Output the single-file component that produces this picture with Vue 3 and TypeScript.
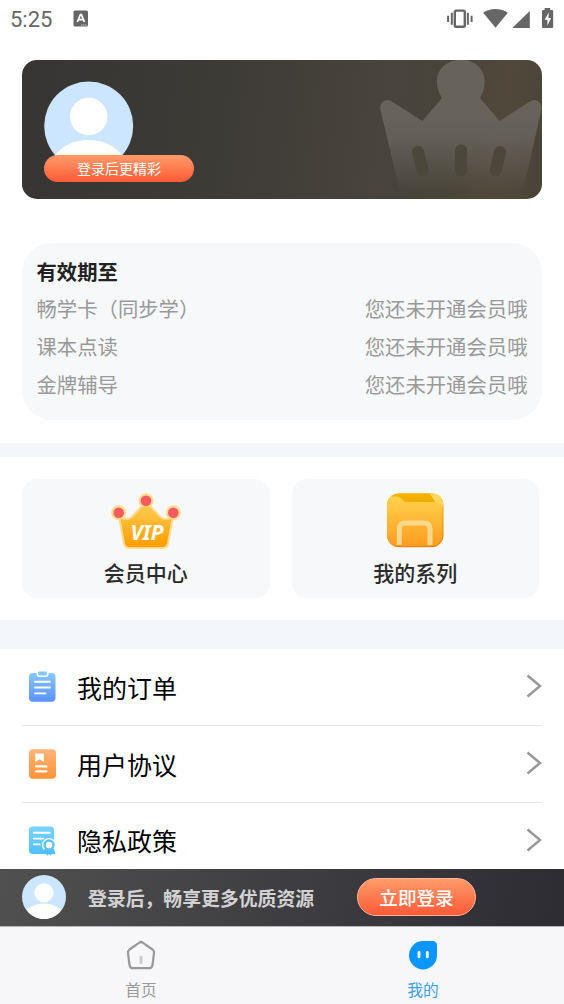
<script setup lang="ts">
interface MenuItem {
  icon: 'order' | 'agreement' | 'privacy'
  label: string
}

const memberships: string[] = ['畅学卡（同步学）', '课本点读', '金牌辅导']

const menu: MenuItem[] = [
  { icon: 'order', label: '我的订单' },
  { icon: 'agreement', label: '用户协议' },
  { icon: 'privacy', label: '隐私政策' },
]
</script>

<template>
  <div class="screen">
    <header class="status">
      <span class="time">5:25</span>
      <svg class="kbd" width="16" height="18" viewBox="0 0 16 18">
        <rect x="0.5" y="0.5" width="14.5" height="16" rx="1.5" fill="#666" />
        <path d="M4.3 12 7.4 4.7h1L11.5 12M5.5 9.6h4.8" fill="none" stroke="#fff" stroke-width="1.7" />
        <path d="M8 15h5.5" stroke="#ccc" stroke-width="1" stroke-dasharray="1.4 .7" />
      </svg>
      <svg class="signals" width="108" height="22" viewBox="446 8 108 22">
        <rect x="454.8" y="10.6" width="10" height="16.2" rx="1.3" fill="none" stroke="#666" stroke-width="2.4" />
        <path d="M451.8 12.7v12M467.9 12.7v12M448.1 15.7v6.3M471.6 15.7v6.3" stroke="#666" stroke-width="2" />
        <path d="M483.2 12.7C490 7.7 501 7.7 507.8 12.7L495.5 27.8Z" fill="#666" />
        <path d="M529.8 11v17h-17.5Z" fill="#666" />
        <path d="M544.6 8h5.6v2h1.8q1.2 0 1.2 1.2v15.6q0 1.2-1.2 1.2h-8.8q-1.2 0-1.2-1.2V11.2q0-1.2 1.2-1.2h1.4z" fill="#666" />
        <path d="M548.7 12.5l-4 7.3h2.7v5.7l3.7-7.4h-2.7z" fill="#fff" />
      </svg>
    </header>

    <section class="hero">
      <svg class="crown" width="164" height="140" viewBox="378 59 164 140">
        <defs>
          <linearGradient id="crownFade" gradientUnits="userSpaceOnUse" x1="0" y1="115" x2="0" y2="192">
            <stop offset="0" stop-color="#67635b" />
            <stop offset=".3" stop-color="#67635b" stop-opacity=".86" />
            <stop offset="1" stop-color="#67635b" stop-opacity="0" />
          </linearGradient>
        </defs>
        <path
          d="M442 98C433 84 436 68 449 62.5C457 58.5 467 59 474 63C487 71 487 86 480 98L499.500 121L530 101.500C536 98 542 102 541.500 109L523 192H400L380.500 110C379 103 385 98 391 101L422.500 121Z"
          fill="url(#crownFade)"
        />
        <g stroke="#4c473b" stroke-width="12" stroke-linecap="round">
          <path d="M418 152l4.800 18.500M461 150.500v20M500 152l-4.400 18.500" />
        </g>
      </svg>
      <div class="hero-user">
        <svg class="avatar" width="90" height="90" viewBox="0 0 90 90">
          <circle cx="44.7" cy="45" r="44.5" fill="#cce6ff" />
          <circle cx="44.7" cy="35.5" r="18.7" fill="#fff" />
          <path d="M10 76C18 64 31 59 44.7 59S71 64 79 76C62 94 28 94 10 76Z" fill="#fff" />
        </svg>
        <button class="hero-login">登录后更精彩</button>
      </div>
    </section>

    <section class="validity">
      <div class="line title">有效期至</div>
      <div v-for="name in memberships" :key="name" class="line">
        <span>{{ name }}</span>
        <span>您还未开通会员哦</span>
      </div>
    </section>

    <div class="band thin"></div>

    <section class="tiles">
      <div class="tile">
        <svg width="72" height="60" viewBox="110 491 72 60">
          <defs>
            <linearGradient id="vipFill" gradientUnits="userSpaceOnUse" x1="0" y1="503" x2="0" y2="547">
              <stop offset="0" stop-color="#ffce59" />
              <stop offset="1" stop-color="#ff9d00" />
            </linearGradient>
          </defs>
          <g fill="#ffdc91">
            <circle cx="118.7" cy="512.7" r="7.500" />
            <circle cx="146" cy="500.8" r="7.500" />
            <circle cx="173.300" cy="512.7" r="7.500" />
          </g>
          <path d="M119 517Q126 520.500 131 517.500L142.500 505.500Q146 502.500 149.500 505.500L161 517.500Q166 520.500 173 517L168 543.500Q167 548 162.500 548H129.500Q125 548 124 543.500Z" fill="url(#vipFill)" stroke="#ffdc91" stroke-width="2" stroke-linejoin="round" />
          <g fill="#f75a5f">
            <circle cx="118.700" cy="512.700" r="5.300" />
            <circle cx="146" cy="500.800" r="5.300" />
            <circle cx="173.300" cy="512.700" r="5.300" />
          </g>
          <text x="147" y="539.600" class="vip" text-anchor="middle" textLength="33" lengthAdjust="spacingAndGlyphs">VIP</text>
        </svg>
        <span>会员中心</span>
      </div>
      <div class="tile">
        <svg width="72" height="60" viewBox="379.5 491 72 60">
          <defs>
            <linearGradient id="folderFill" x1="0" y1="0" x2="0" y2="1">
              <stop offset="0" stop-color="#ffd24d" />
              <stop offset="1" stop-color="#ff9c20" />
            </linearGradient>
            <linearGradient id="folderBack" x1="0" y1="0" x2="0" y2="1">
              <stop offset="0" stop-color="#f3b300" />
              <stop offset="1" stop-color="#ee8200" />
            </linearGradient>
          </defs>
          <rect x="387.500" y="493.300" width="56.500" height="54" rx="12" fill="url(#folderBack)" />
          <path d="M430 493.300Q443.500 493.300 444 506V508L436 502Z" fill="#ffd75c" />
          <path d="M387.500 506Q387.500 499.500 391.500 496.500H398Q400 496.500 401.500 498.300L404 500.700Q405.300 502 407.500 502H436Q443 502.500 443 509V533Q443 546 430.500 546H399Q387.500 545.500 387.500 533Z" fill="url(#folderFill)" />
          <path d="M399.800 545V529Q399.800 523 405.800 523H424.500Q430.500 523 430.500 529V545" fill="none" stroke="#f9d88c" stroke-width="5" />
        </svg>
        <span>我的系列</span>
      </div>
    </section>

    <div class="band thick"></div>

    <section class="menu">
      <div v-for="item in menu" :key="item.label" class="menu-row">
        <svg v-if="item.icon === 'order'" class="menu-icon" width="28" height="30" viewBox="0 0 28 30">
          <defs>
            <linearGradient id="orderFill" x1="0" y1="0" x2="0" y2="1">
              <stop offset="0" stop-color="#87c7ff" />
              <stop offset="1" stop-color="#5b91ff" />
            </linearGradient>
          </defs>
          <rect x="1" y="1" width="26.500" height="28.700" rx="4" fill="url(#orderFill)" />
          <rect x="9.300" y="-1.300" width="10.500" height="5.500" rx="2.200" fill="#87c7ff" stroke="#fff" stroke-width="1.500" />
          <path d="M7 9.700h15M7 15.500h15M7 21.400h10.500" stroke="#fff" stroke-width="1.900" stroke-linecap="round" />
        </svg>
        <svg v-else-if="item.icon === 'agreement'" class="menu-icon" width="28" height="30" viewBox="0 0 28 30">
          <defs>
            <linearGradient id="agreementFill" x1="0" y1="0" x2="0" y2="1">
              <stop offset="0" stop-color="#ffb47b" />
              <stop offset="1" stop-color="#ff9335" />
            </linearGradient>
          </defs>
          <rect x="1" y="0.300" width="27" height="29.400" rx="4" fill="url(#agreementFill)" />
          <path d="M7.300 4.500h8.500v8.500l-4.200-2.800-4.300 2.800z" fill="#fff" />
          <path d="M8 17.400h10.500M8 22.300h10.500" stroke="#fff" stroke-width="2.200" stroke-linecap="round" />
        </svg>
        <svg v-else class="menu-icon" width="28" height="30" viewBox="0 0 28 30">
          <defs>
            <linearGradient id="privacyFill" x1="0" y1="0" x2="0" y2="1">
              <stop offset="0" stop-color="#78d5ff" />
              <stop offset="1" stop-color="#51bfff" />
            </linearGradient>
          </defs>
          <rect x="1" y="1.500" width="25" height="27.500" rx="3.500" fill="url(#privacyFill)" />
          <path d="M5.700 7.800h16M5.700 13.600h9.500M5.700 19.400h6" stroke="#fff" stroke-width="1.900" stroke-linecap="round" />
          <circle cx="21" cy="20" r="7" fill="#fff" />
          <path d="M16.500 24l-1.500 5.300 3.200-.3 1.300 1.700 1.500-2 1.500 2 1.300-1.700 3.700.3-1.500-5.300z" fill="#53bfff" />
          <circle cx="21" cy="20" r="4.500" fill="#fff" stroke="#5bc4ff" stroke-width="2.500" />
        </svg>
        <span class="menu-label">{{ item.label }}</span>
        <svg class="chevron" width="16" height="24" viewBox="0 0 16 24">
          <path d="M1.500 1.500 14 12 1.500 22.500" fill="none" stroke="#999" stroke-width="2.500" />
        </svg>
      </div>
    </section>

    <section class="login-bar">
      <svg class="mini-avatar" width="44" height="44" viewBox="0 0 90 90">
        <circle cx="45" cy="45" r="45" fill="#cce6ff" />
        <circle cx="45" cy="36.500" r="19.500" fill="#fff" />
        <path d="M10 72C18 63 31 59 45 59S72 63 80 72C64 96 26 96 10 72Z" fill="#fff" />
      </svg>
      <span class="login-text">登录后，畅享更多优质资源</span>
      <button class="login-now">立即登录</button>
    </section>

    <nav class="tabs">
      <div class="tab">
        <svg width="32" height="32" viewBox="125 939 32 32">
          <path d="M139 942.800Q141 941.200 143 942.800L152.500 949.500Q154.300 950.900 154 953L152.500 965Q152.100 968.200 149 968.200H133Q129.900 968.200 129.500 965L128 953Q127.700 950.900 129.500 949.500Z" fill="none" stroke="#999" stroke-width="2.200" />
          <path d="M141 957v5.500" stroke="#ccc" stroke-width="3" stroke-linecap="round" />
        </svg>
        <span>首页</span>
      </div>
      <div class="tab active">
        <svg width="32" height="32" viewBox="407 939 32 32">
          <path d="M423 941H432.500Q437 941 437 945.500V955.200A14 14.200 0 1 1 423 941Z" fill="#0a96ff" />
          <path d="M419 952.500v4.400M427.300 952.500v4.400" stroke="#fff" stroke-width="2.800" stroke-linecap="round" />
        </svg>
        <span>我的</span>
      </div>
    </nav>
  </div>
</template>

<style>
body {
  overflow: hidden;
}
</style>

<style scoped>
.screen {
  box-sizing: border-box;
  width: 564px;
  height: 1004px;
  display: flex;
  flex-direction: column;
  background: #fff;
  color: #000;
  font-family: "Noto Sans CJK SC", sans-serif;
  overflow: hidden;
  white-space: nowrap;
}
.screen > * {
  flex-shrink: 0;
}
svg {
  display: block;
  flex-shrink: 0;
}
button {
  border: 0;
  padding: 0;
  margin: 0;
  font-family: inherit;
  color: #fff;
}
.status {
  box-sizing: border-box;
  height: 40px;
  padding: 8px 10px 0;
  display: flex;
  align-items: flex-start;
}
.time {
  width: 63px;
  font: 22px/24px Roboto, sans-serif;
  color: #666;
}
.kbd {
  margin-top: 2px;
}
.signals {
  margin-left: auto;
}
.hero {
  position: relative;
  box-sizing: border-box;
  height: 139.500px;
  margin: 19.500px 22px 0;
  padding: 21.500px 22px;
  border-radius: 15px;
  overflow: hidden;
  background: linear-gradient(97deg, #363534 0%, #3d3b36 38%, #48433c 67%, #4a4539 83%, #51483b 91%, #4b4539 98%);
}
.crown {
  position: absolute;
  right: 0;
  top: -0.500px;
}
.hero-user {
  position: relative;
  width: 150px;
  height: 101px;
  display: flex;
  flex-direction: column;
}
.hero-login {
  position: relative;
  height: 27px;
  margin-top: -16px;
  border-radius: 14px;
  background: linear-gradient(#ff9b6a, #ff5a37);
  font-size: 14px;
  line-height: 27px;
}
.validity {
  box-sizing: border-box;
  height: 177px;
  margin: 44px 22px 0;
  padding: 9.500px 14.500px 0;
  border-radius: 30px;
  background: #f7f8fa;
}
.line {
  height: 37.700px;
  display: flex;
  justify-content: space-between;
  font-size: 20.350px;
  line-height: 37.700px;
  color: #999;
}
.title {
  color: #222;
  font-weight: 700;
}
.band {
  background: #f3f7fb;
}
.thin {
  height: 14px;
  margin-top: 22.500px;
}
.thick {
  height: 29px;
  margin-top: 22px;
}
.tiles {
  display: flex;
  gap: 22px;
  padding: 22.500px 25px 0 22px;
}
.tile {
  box-sizing: border-box;
  flex: 1;
  height: 119px;
  padding-top: 12px;
  border-radius: 15px;
  background: #f7f8fa;
  display: flex;
  flex-direction: column;
  align-items: center;
  font-size: 21px;
  font-weight: 500;
  line-height: 32px;
  color: #2b2b2b;
}
.tile span {
  margin-top: 5px;
}
.vip {
  font: italic 700 22px "Noto Sans", sans-serif;
  fill: #fff;
}
.menu {
  height: 220px;
  padding: 0 22px;
  overflow: hidden;
}
.menu-icon {
  overflow: visible;
}
.menu-row {
  box-sizing: border-box;
  height: 76.800px;
  padding: 0 0 0 6px;
  border-bottom: 1.500px solid #e6e6e6;
  display: flex;
  align-items: center;
}
.menu-label {
  margin-left: 21px;
  font-size: 25px;
  line-height: 36px;
}
.chevron {
  margin-left: auto;
  margin-bottom: 1px;
}
.login-bar {
  box-sizing: border-box;
  height: 57px;
  padding: 0 22px 1px;
  display: flex;
  align-items: center;
  background: linear-gradient(100deg, #505050, #2d2c33);
}
.login-text {
  width: 269px;
  margin-left: 22px;
  font-size: 18.850px;
  font-weight: 700;
  color: #d2d2d2;
}
.login-now {
  box-sizing: border-box;
  width: 119px;
  height: 38px;
  border: 1.500px solid #ffb49b;
  border-radius: 19px;
  background: linear-gradient(#ff9b6a, #ff5a37);
  font-size: 18.600px;
  font-weight: 500;
  line-height: 34px;
}
.tabs {
  box-sizing: border-box;
  height: 78px;
  border-top: 1px solid #b8b8bb;
  display: flex;
  background: #f7f7fa;
}
.tab {
  flex: 1;
  padding-top: 12px;
  display: flex;
  flex-direction: column;
  align-items: center;
  font-size: 15.700px;
  line-height: 24px;
  color: #999;
}
.tab span {
  margin-top: 7px;
}
.active {
  color: #3aa0f5;
}
</style>
